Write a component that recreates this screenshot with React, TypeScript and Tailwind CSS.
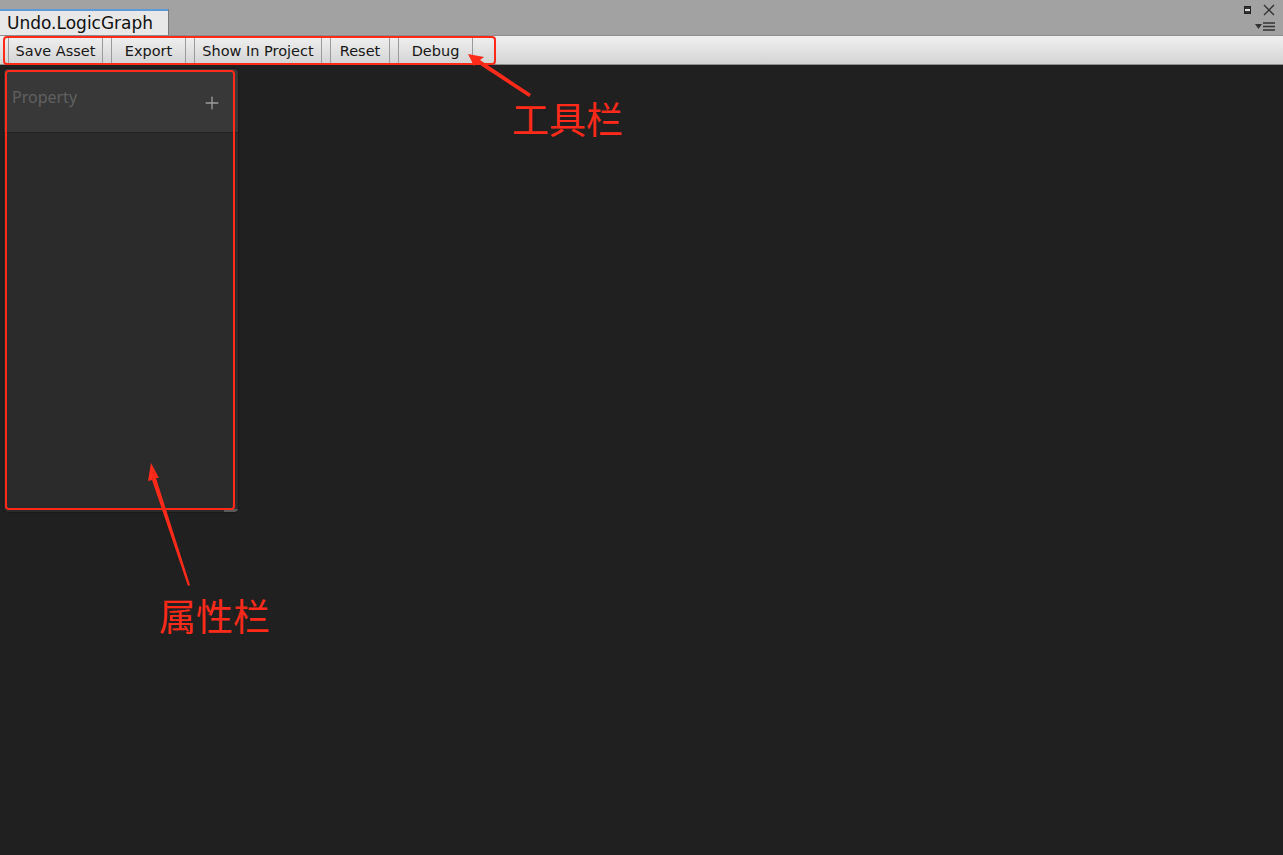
import { Plus } from 'lucide-react'

const buttons = [
  { label: 'Save Asset', width: 'w-[95px]' },
  { label: 'Export', width: 'w-[75px]' },
  { label: 'Show In Project', width: 'w-[128px]' },
  { label: 'Reset', width: 'w-[60px]' },
  { label: 'Debug', width: 'w-[75px]' },
]

function ToolbarButton({ label, width }: { label: string; width: string }) {
  return (
    <div
      className={`flex h-[26px] ${width} items-center justify-center border-x border-x-[#9a9a9a] pt-[4px] text-[14.5px] text-[#161616]`}
    >
      {label}
    </div>
  )
}

function Annotations() {
  return (
    <div className="pointer-events-none absolute inset-0">
      {/* toolbar box */}
      <div className="absolute left-[3px] top-[36px] h-[29px] w-[493px] rounded-[4px] border-2 border-[#ff2a1a]" />
      {/* property box */}
      <div className="absolute left-[5px] top-[70px] h-[440px] w-[230px] rounded-[4px] border-2 border-[#ff2a1a]" />
      <svg className="absolute left-0 top-0" width="1283" height="855">
        <polygon points="468,54 484,57 480,60 531,94 529,97 477,63 474,66" fill="#ff2a1a" />
        <polygon points="151,463 159,478 156,478 190,585 188,586 152,480 148,481" fill="#ff2a1a" />
      </svg>
      <div
        className="absolute left-[512px] top-[94px] text-[37px] leading-[48px] text-[#ff2a1a]"
        style={{ fontFamily: '"Noto Sans CJK SC", sans-serif' }}
      >
        工具栏
      </div>
      <div
        className="absolute left-[159px] top-[591px] text-[37px] leading-[48px] text-[#ff2a1a]"
        style={{ fontFamily: '"Noto Sans CJK SC", sans-serif' }}
      >
        属性栏
      </div>
    </div>
  )
}

export default function App() {
  return (
    <div
      className="relative flex h-[855px] w-[1283px] flex-col overflow-hidden bg-[#202020]"
      style={{ fontFamily: '"DejaVu Sans", "Liberation Sans", sans-serif' }}
    >
      {/* tab strip */}
      <div className="flex h-[35px] items-end justify-between bg-[#a2a2a2]">
        <div className="flex h-[26px] w-[168px] items-center border-t-2 border-t-[#5d9bd8] bg-[#e8e8e8] pl-[7px] pt-[1px] text-[17px] text-[#101010] shadow-[1px_0_0_#7a7a7a]">
          Undo.LogicGraph
        </div>
        <div className="flex flex-col items-end gap-[6px] self-start pr-[8px] pt-[4px]">
          <div className="flex items-center gap-[12px]">
            <div className="h-[8px] w-[7px] border border-[#222] bg-[#333]">
              <div className="mt-[2px] h-[2px] bg-[#ddd]" />
            </div>
            <svg width="12" height="12" viewBox="0 0 12 12">
              <path d="M1 1 L11 11 M11 1 L1 11" stroke="#333" strokeWidth="1.4" />
            </svg>
          </div>
          <div className="flex items-center gap-[1px]">
            <svg width="7" height="5" viewBox="0 0 7 5">
              <path d="M0 0 L7 0 L3.5 5 Z" fill="#333" />
            </svg>
            <svg width="12" height="9" viewBox="0 0 12 9">
              <path d="M0 1 H12 M0 4.5 H12 M0 8 H12" stroke="#333" strokeWidth="1.3" />
            </svg>
          </div>
        </div>
      </div>

      {/* toolbar */}
      <div className="flex h-[30px] items-center border-y border-y-[#8e8e8e] bg-gradient-to-b from-[#f0f0f0] to-[#d4d4d4] pl-[8px]">
        <div className="flex gap-[8px]">
          {buttons.map((b) => (
            <ToolbarButton key={b.label} label={b.label} width={b.width} />
          ))}
        </div>
      </div>

      {/* graph area */}
      <div className="flex-1 p-[3px] pt-[3px]">
        <div className="flex h-[445px] w-[236px] flex-col overflow-hidden rounded-[5px] border border-[#1a1a1a] bg-[#2b2b2b]">
          <div className="flex h-[64px] items-start justify-between border-b border-b-[#222] bg-[#383838] pl-[8px] pr-[16px] pt-[16px]">
            <span
              className="text-[16px] text-[#606060]"
              style={{ fontFamily: '"Noto Sans", sans-serif' }}
            >
              Property
            </span>
            <Plus size={20} strokeWidth={1.6} className="mt-[8px] text-[#9c9c9c]" />
          </div>
          <div className="flex-1" />
          <div className="flex justify-end">
            <div className="h-[3px] w-[14px] bg-[#5a5a5a]" />
          </div>
        </div>
      </div>

      <Annotations />
    </div>
  )
}
